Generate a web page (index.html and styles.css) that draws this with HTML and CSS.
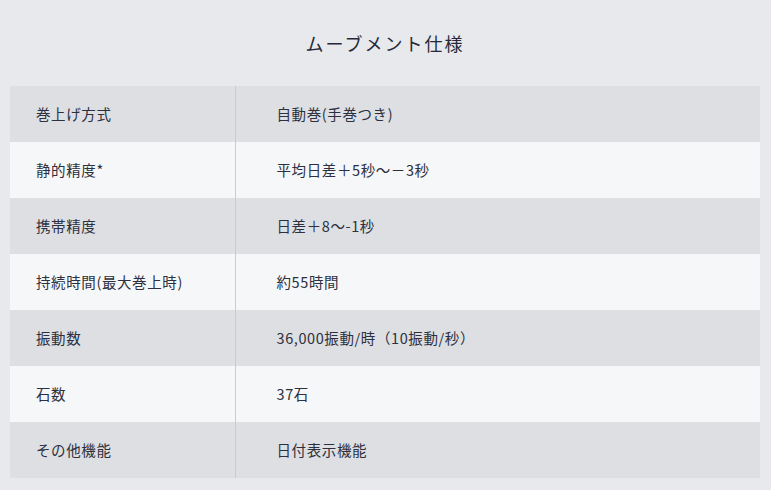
FILE: index.html
```html
<!DOCTYPE html>
<html lang="ja">
<head>
<meta charset="utf-8">
<link rel="stylesheet" href="styles.css">
</head>
<body>
<div class="page">
  <h2 class="title">ムーブメント仕様</h2>
  <table class="spec">
    <tr class="odd"><th>巻上げ方式</th><td>自動巻(手巻つき)</td></tr>
    <tr class="even"><th>静的精度*</th><td>平均日差＋5秒～－3秒</td></tr>
    <tr class="odd"><th>携帯精度</th><td>日差＋8～-1秒</td></tr>
    <tr class="even"><th>持続時間(最大巻上時)</th><td>約55時間</td></tr>
    <tr class="odd"><th>振動数</th><td>36,000振動/時（10振動/秒）</td></tr>
    <tr class="even"><th>石数</th><td>37石</td></tr>
    <tr class="odd"><th>その他機能</th><td>日付表示機能</td></tr>
  </table>
</div>
</body>
</html>
```
FILE: styles.css
```css
html, body {
  margin: 0;
  padding: 0;
  background: #e8e9ed;
}
body {
  font-family: "Noto Sans CJK JP", "Noto Sans", sans-serif;
  color: #2c3040;
}
.page {
  padding: 0 11px 0 10px;
}
.title {
  margin: 0;
  height: 86px;
  line-height: 86px;
  text-align: center;
  font-size: 18px;
  font-weight: 400;
  letter-spacing: 2px;
  color: #262a38;
}
.spec {
  width: 100%;
  border-collapse: collapse;
  font-size: 14.5px;
}
.spec tr {
  height: 56px;
}
.spec .odd { background: #dddfe3; }
.spec .even { background: #f6f7f9; }
.spec th {
  width: 225px;
  box-sizing: border-box;
  text-align: left;
  font-weight: 400;
  padding: 0 0 2px 26px;
  border-right: 1px solid #c9cbd0;
  letter-spacing: 0.6px;
}
.spec td {
  padding: 0 0 2px 41px;
  letter-spacing: 0.6px;
}
```
